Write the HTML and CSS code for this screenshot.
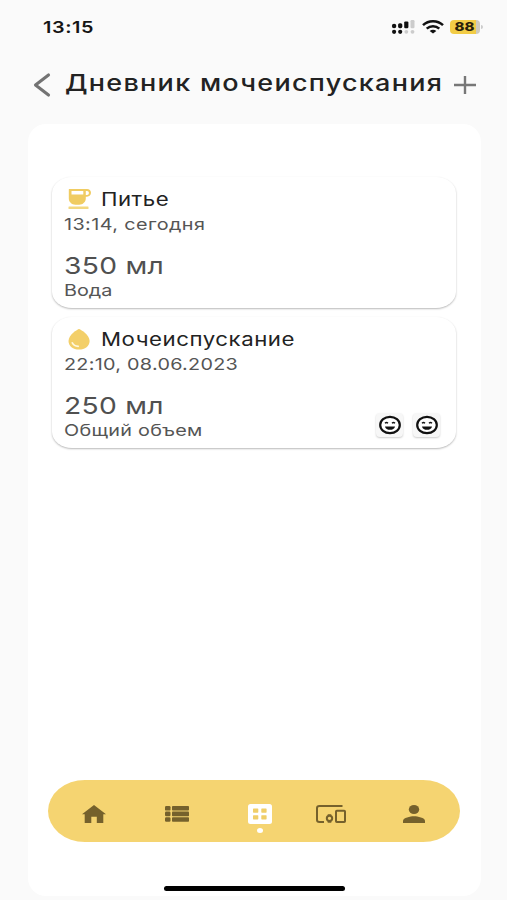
FILE: index.html
```html
<!DOCTYPE html>
<html lang="ru">
<head>
<meta charset="utf-8">
<title>Дневник мочеиспускания</title>
<link rel="stylesheet" href="styles.css">
</head>
<body>
<div class="screen">
  <div class="status">
    <span class="wide clock">13:15</span>
    <div class="indicators">
      <svg class="signal" viewBox="0 0 23 14"><g fill="#111"><circle cx="2.1" cy="6" r="2.200"/><rect x="6.1" y="3.200" width="4.200" height="5" rx="1.6"/><rect x="12.2" y="1.400" width="4.200" height="6.800" rx="1.200"/><circle cx="2.1" cy="11.800" r="2.100"/><circle cx="8.2" cy="11.800" r="2.100"/></g><g fill="#ccc"><rect x="18.5" y="0" width="4" height="8.2" rx="1.2"/><circle cx="14.3" cy="11.8" r="1.9"/><circle cx="20.5" cy="11.8" r="1.9"/></g></svg>
      <svg class="wifi" viewBox="0 0 22 14"><g fill="none" stroke="#111" stroke-width="2.5"><path d="M1 5.2C6.5-.1 15.5-.1 21 5.2"/><path d="M4.7 8.6c3.6-3.3 9-3.3 12.6 0"/></g><path d="M7.7 10.9c1.9-1.6 4.7-1.6 6.6 0L11 13.6z" fill="#111"/></svg>
      <div class="battery"><span>88</span></div>
      <i class="battery-tip"></i>
    </div>
  </div>
  <header class="header">
    <svg class="back" viewBox="0 0 18 26"><path d="M15.5 3 2.500 13l13 10" fill="none" stroke="#737373" stroke-width="3.100" stroke-linecap="round" stroke-linejoin="round"/></svg>
    <h1><span class="wide page-title">Дневник мочеиспускания</span></h1>
    <svg class="plus" viewBox="0 0 22 18"><path d="M0 9h22M11 0v18" stroke="#777" stroke-width="2.4"/></svg>
  </header>
  <main class="panel">
    <article class="card">
      <div class="card-head">
        <svg class="icon" viewBox="0 0 24 21"><path fill="#f0cc62" fill-rule="evenodd" d="M2.3 0H20c2.400 0 4 1.500 4 3.800S22.400 7.700 20 7.700h-1.200V9.500c0 3.400-3 6.200-6.600 6.200H8.400c-3.600 0-6.600-2.800-6.600-6.200V1.200C1.800.4 1.800 0 2.300 0zM4.500 2v3.500h11.800V2zM18.800 1.900v4H20c1.200 0 1.900-.8 1.900-2s-.7-2-1.900-2z"/><rect x="1.500" y="17.600" width="20" height="2.400" rx=".5" fill="#f3d880"/></svg>
        <h2><span class="wide name-a">Питье</span></h2>
      </div>
      <p class="when"><span class="wide when-a">13:14, сегодня</span></p>
      <p class="amount"><span class="wide">350 мл</span></p>
      <p class="label"><span class="wide">Вода</span></p>
    </article>
    <article class="card">
      <div class="card-head">
        <svg class="icon" viewBox="0 0 24 21"><path fill="#f3cf69" d="M12 0C10.500.4 1.500 5.500 1.500 12c0 5 4.500 8.600 10.500 8.600S22.600 17 22.600 12C22.600 5.500 13.500.4 12 0z"/><path d="M5.300 13.800c1 2.100 3 3.300 6 3.500" fill="none" stroke="#fff8df" stroke-width="1.700" stroke-linecap="round"/></svg>
        <h2><span class="wide name-b">Мочеиспускание</span></h2>
      </div>
      <p class="when"><span class="wide when-b">22:10, 08.06.2023</span></p>
      <p class="amount"><span class="wide">250 мл</span></p>
      <div class="card-foot">
        <p class="label"><span class="wide label-b">Общий объем</span></p>
        <div class="moods">
          <div class="mood"><svg viewBox="0 0 24 20"><ellipse cx="12" cy="10" rx="9.800" ry="8.200" fill="#fff" stroke="#111" stroke-width="2.200"/><path d="M7 8.200q1.500-1.500 3 0M14 8.200q1.500-1.500 3 0" fill="none" stroke="#111" stroke-width="1.300"/><path d="M7 11.400h10c-.6 4.600-9.400 4.600-10 0z" fill="#111"/></svg></div>
          <div class="mood"><svg viewBox="0 0 24 20"><ellipse cx="12" cy="10" rx="9.800" ry="8.200" fill="#fff" stroke="#111" stroke-width="2.200"/><path d="M7 8.200q1.500-1.500 3 0M14 8.200q1.500-1.500 3 0" fill="none" stroke="#111" stroke-width="1.300"/><path d="M7 11.400h10c-.6 4.600-9.400 4.600-10 0z" fill="#111"/></svg></div>
        </div>
      </div>
    </article>
    <nav class="nav">
      <svg class="home" viewBox="0 0 24 18"><path fill="#75612c" d="M12 0 24 9.300h-2.700V18h-6.500v-6.300H9.300V18H2.700V9.300H0z"/></svg>
      <svg class="list" viewBox="0 0 24 16"><g fill="#75612c"><rect width="5.500" height="4.600" rx="1.200"/><rect x="7" width="17" height="4.600" rx=".8"/><rect y="5.600" width="5.500" height="4.600" rx="1.200"/><rect x="7" y="5.600" width="17" height="4.600" rx=".8"/><rect y="11.200" width="5.500" height="4.600" rx="1.200"/><rect x="7" y="11.200" width="17" height="4.600" rx=".8"/></g></svg>
      <div class="active">
        <svg viewBox="0 0 24 20"><rect width="24" height="20" rx="2.500" fill="#fff"/><g fill="#f0ce68"><rect x="5" y="4.500" width="5.300" height="4.200" rx=".6"/><rect x="13.300" y="4.500" width="5.300" height="4.200" rx=".6"/><rect x="5" y="11.200" width="5.300" height="4.200" rx=".6"/><rect x="13.300" y="11.200" width="5.300" height="4.200" rx=".6"/></g></svg>
        <i class="dot"></i>
      </div>
      <svg class="devices" viewBox="0 0 30 18"><g fill="none" stroke="#75612c" stroke-width="2"><path d="M26.500 1H3.500Q1 1 1 3v12q0 2 2.500 2H8"/><ellipse cx="13.500" cy="13.300" rx="2.700" ry="2.600"/><rect x="20" y="5.800" width="9" height="11.200" rx=".8"/></g><path d="M11.700 9.300h3.600v1.500h-3.600zM11.700 16h3.600v1.800h-3.600z" fill="#75612c"/></svg>
      <svg class="person" viewBox="0 0 22 18"><g fill="#75612c"><ellipse cx="11" cy="4.500" rx="5.200" ry="4.500"/><path d="M0 18v-2.300c0-3 7.300-4.500 11-4.500s11 1.500 11 4.500V18z"/></g></svg>
    </nav>
    <div class="home-bar"></div>
  </main>
</div>
</body>
</html>
```
FILE: styles.css
```css
* { box-sizing: border-box; margin: 0; padding: 0; }
body { width: 507px; height: 900px; overflow: hidden; background: #fafafa; font-family: Inter, "Noto Sans", sans-serif; color: #222; }
svg { display: block; flex: none; overflow: visible; }
.screen { display: flex; flex-direction: column; height: 900px; }
.wide { display: inline-block; white-space: nowrap; transform: scaleX(1.2); transform-origin: left center; }

.status { display: flex; justify-content: space-between; height: 55px; padding: 0 24px 0 43px; }
.clock { font-size: 16.5px; line-height: 55px; font-weight: 600; letter-spacing: .5px; color: #151515; }
.indicators { display: flex; align-items: center; height: 54px; }
.signal { width: 23px; height: 14px; margin-right: 7px; }
.wifi { width: 22px; height: 14px; margin-right: 6px; }
.battery { width: 30px; height: 14px; border-radius: 4px; background: linear-gradient(90deg, #f2cc46 87%, #cfcbbf 87%); text-align: center; }
.battery span { display: block; margin-right: 1px; font-size: 12px; line-height: 14px; font-weight: 800; color: #28200a; transform: scaleX(1.25); }
.battery-tip { width: 2px; height: 4px; margin-left: 1px; border-radius: 0 2px 2px 0; background: #ccc; }

.header { display: flex; align-items: center; height: 58px; margin-bottom: 11px; padding-left: 33px; }
.back { width: 18px; height: 26px; margin: 2px 14px 0 0; }
h1 { width: 389px; font-size: 22.5px; line-height: 30px; font-weight: 500; margin-top: -2px; }
.page-title { letter-spacing: 1.06px; }
.plus { width: 22px; height: 18px; margin-top: 2px; }

.panel { display: flex; flex-direction: column; width: 453px; height: 772px; margin-left: 28px; padding: 53px 25px 4px 24px; border-radius: 18px; background: #fff; }
.card { height: 131px; margin-bottom: 9px; padding: 10px 14px 0 12px; border-radius: 20px / 16px; background: #fff; box-shadow: 0 1px 2px rgba(0, 0, 0, .28); }
.card-head { display: flex; align-items: center; height: 25px; }
.icon { width: 24px; height: 21px; margin: 0 10px 0 3px; }
h2 { font-size: 18.5px; line-height: 25px; font-weight: 400; color: #222; }
.name-a { letter-spacing: .4px; }
.name-b { letter-spacing: .46px; }
.when { height: 38px; font-size: 16.5px; line-height: 25px; color: #555; }
.when-a { letter-spacing: .34px; }
.when-b { letter-spacing: .23px; }
.amount { height: 31px; font-size: 23.5px; line-height: 31px; letter-spacing: .25px; color: #505050; }
.label { height: 19px; font-size: 16.5px; line-height: 19px; color: #555; }
.label-b { letter-spacing: .23px; }
.card-foot { display: flex; justify-content: space-between; }
.moods { display: flex; gap: 10px; margin: -8px 2px 0 0; }
.mood { width: 27px; height: 24px; padding: 2px 1.5px; border-radius: 4px; background: #f7f7f7; box-shadow: 0 1px 2px rgba(0, 0, 0, .2); }
.mood svg { width: 24px; height: 20px; }

.nav { display: flex; align-items: center; width: 412px; height: 62px; margin: auto 0 45px -4px; padding: 0 34px; border-radius: 37px / 31px; background: #f5d471; }
.home { width: 24px; height: 18px; margin: 5px 59px 0 0; }
.list { width: 24px; height: 16px; margin: 5px 59px 0 0; }
.active { display: flex; flex-direction: column; align-items: center; gap: 4px; margin: 15px 43.5px 0 0; }
.active svg { width: 24px; height: 20px; }
.dot { width: 6px; height: 5px; border-radius: 50%; background: #fff; }
.devices { width: 30px; height: 18px; margin: 6px 57px 0 0; }
.person { width: 22px; height: 18px; margin-top: 5px; }
.home-bar { width: 181px; height: 5px; margin: -1px 0 1px 112px; border-radius: 3px; background: #000; }
```
